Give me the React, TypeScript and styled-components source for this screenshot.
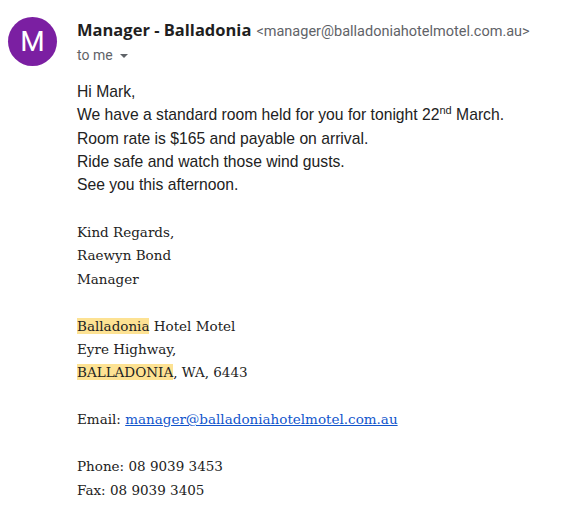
import * as React from 'react';
import styled, { createGlobalStyle } from 'styled-components';

const GlobalStyle = createGlobalStyle`
	body {
		margin: 0;
		background: #ffffff;
	}
`;

const Message = styled.div`
	display: flex;
	gap: 20px;
	padding: 17px 0 0 8px;
`;

const Avatar = styled.div`
	flex: none;
	width: 49px;
	height: 49px;
	border-radius: 50%;
	background: #7b1fa2;
	color: #ffffff;
	display: flex;
	align-items: center;
	justify-content: center;
	font-family: Roboto, 'Liberation Sans', sans-serif;
	font-size: 28px;
`;

const Content = styled.div`
	display: flex;
	flex-direction: column;
`;

const Header = styled.div`
	display: flex;
	align-items: baseline;
	gap: 5px;
	line-height: 26px;
`;

const Sender = styled.span`
	font-family: 'Open Sans', Roboto, sans-serif;
	font-weight: 700;
	font-size: 16.5px;
	color: #1f1f1f;
`;

const SenderEmail = styled.span`
	font-family: Roboto, 'Liberation Sans', sans-serif;
	font-size: 14.5px;
	color: #5f6368;
`;

const Recipients = styled.div`
	display: flex;
	align-items: center;
	gap: 7px;
	font-family: Roboto, 'Liberation Sans', sans-serif;
	font-size: 14px;
	color: #5f6368;
	line-height: 20px;
`;

const Caret = styled.span`
	width: 0;
	height: 0;
	margin-top: 1px;
	border-left: 4.5px solid transparent;
	border-right: 4.5px solid transparent;
	border-top: 4.5px solid #5f6368;
`;

const Body = styled.div`
	margin-top: 15px;
	font-family: Arial, 'Liberation Sans', sans-serif;
	font-size: 15.7px;
	line-height: 23.3px;
	color: #222222;

	sup {
		font-size: 11px;
		line-height: 0;
	}
`;

const Signature = styled.div`
	margin-top: 24.3px;
	font-family: 'DejaVu Serif', serif;
	font-size: 13.5px;
	line-height: 23.45px;
	color: #222222;
`;

const Gap = styled.div`
	height: 23.45px;
`;

const Mark = styled.mark`
	background: #fde293;
	color: inherit;
`;

const Link = styled.a`
	color: #1155cc;
	text-decoration: underline;
`;

export default function App() {
	return (
		<>
			<GlobalStyle />
			<Message>
				<Avatar>M</Avatar>
				<Content>
					<Header>
						<Sender>Manager - Balladonia</Sender>
						<SenderEmail>&lt;manager@balladoniahotelmotel.com.au&gt;</SenderEmail>
					</Header>
					<Recipients>
						to me <Caret />
					</Recipients>
					<Body>
						<div>Hi Mark,</div>
						<div>
							We have a standard room held for you for tonight 22<sup>nd</sup> March.
						</div>
						<div>Room rate is $165 and payable on arrival.</div>
						<div>Ride safe and watch those wind gusts.</div>
						<div>See you this afternoon.</div>
					</Body>
					<Signature>
						<div>Kind Regards,</div>
						<div>Raewyn Bond</div>
						<div>Manager</div>
						<Gap />
						<div>
							<Mark>Balladonia</Mark> Hotel Motel
						</div>
						<div>Eyre Highway,</div>
						<div>
							<Mark>BALLADONIA</Mark>, WA, 6443
						</div>
						<Gap />
						<div>
							Email: <Link href="#">manager@balladoniahotelmotel.com.au</Link>
						</div>
						<Gap />
						<div>Phone: 08 9039 3453</div>
						<div>Fax: 08 9039 3405</div>
					</Signature>
				</Content>
			</Message>
		</>
	);
}
